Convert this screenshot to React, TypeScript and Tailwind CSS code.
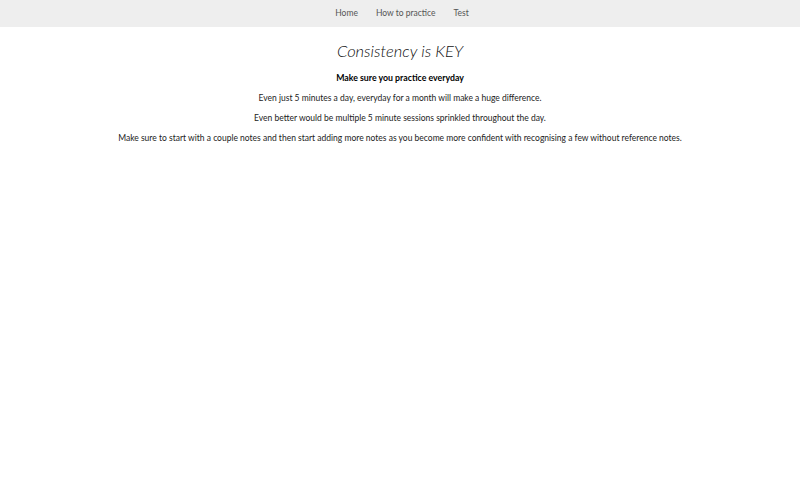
import React from "react";

const navLinks = ["Home", "How to practice", "Test"];

const App: React.FC = () => {
  return (
    <div className="min-h-screen bg-white font-['Lato',sans-serif] text-[#222]">
      {/* Navigation */}
      <nav className="h-[27px] bg-[#eeeeee] flex justify-center items-center gap-[18px] pb-[1px] pl-[4px]">
        {navLinks.map((link) => (
          <a key={link} href="#" className="text-[8.5px] text-[#555]">
            {link}
          </a>
        ))}
      </nav>

      {/* Content */}
      <main className="flex flex-col items-center text-center">
        <h1 className="mt-[11px] text-[16.5px] leading-[26px] italic font-light text-[#111]">
          Consistency is KEY
        </h1>
        <p className="mt-[7px] text-[8.75px] leading-[14px] font-bold text-black">
          Make sure you practice everyday
        </p>
        <p className="mt-[6px] text-[8.5px] leading-[14px]">
          Even just 5 minutes a day, everyday for a month will make a huge difference.
        </p>
        <p className="mt-[6px] text-[8.5px] leading-[14px]">
          Even better would be multiple 5 minute sessions sprinkled throughout the day.
        </p>
        <p className="mt-[6px] text-[8.5px] leading-[14px]">
          Make sure to start with a couple notes and then start adding more notes as you become more confident with recognising a few without reference notes.
        </p>
      </main>
    </div>
  );
};

export default App;
